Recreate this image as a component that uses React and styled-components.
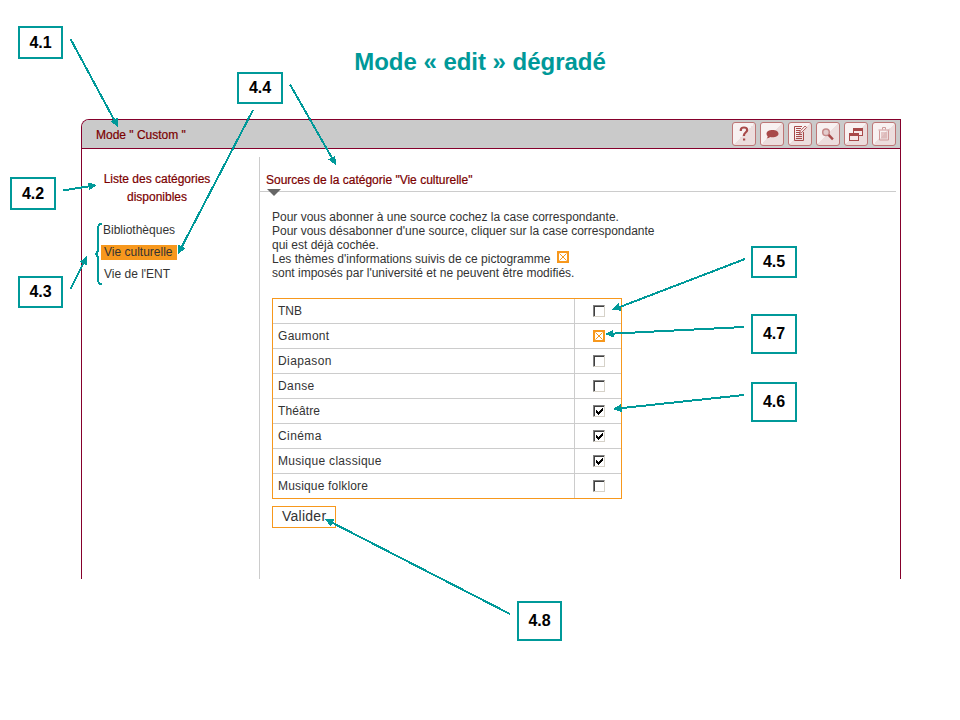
import React from "react";
import styled, { createGlobalStyle } from "styled-components";

const TEAL = "#009999";
const WINE = "#85002b";
const ORANGE = "#f7981d";
const RULE = "#cccccc";

const GlobalStyle = createGlobalStyle`
  *, *::before, *::after { box-sizing: border-box; }
  body {
    margin: 0;
    background: #ffffff;
    font-family: "Liberation Sans", Arial, sans-serif;
    font-size: 12px;
    color: #333333;
  }
`;

const Page = styled.div`
  position: relative;
  width: 960px;
  height: 720px;
  overflow: hidden;
  background: #ffffff;
`;

const Title = styled.h1`
  margin: 0;
  height: 119px;
  padding-top: 48px;
  text-align: center;
  font-size: 24px;
  line-height: 28px;
  font-weight: bold;
  letter-spacing: -0.02px;
  color: ${TEAL};
`;

const Panel = styled.section`
  display: flex;
  flex-direction: column;
  width: 820px;
  height: 460px;
  margin-left: 81px;
  border: 1px solid ${WINE};
  border-bottom: none;
  border-top-left-radius: 8px;
`;

const Header = styled.header`
  display: flex;
  align-items: center;
  justify-content: space-between;
  height: 29px;
  flex: none;
  padding: 0 4px 0 14px;
  background: #cacaca;
  border-bottom: 1px solid ${WINE};
  border-top-left-radius: 7px;
`;

const Heading = styled.span`
  color: #7b0000;
  -webkit-text-stroke: 0.2px #7b0000;
  padding-top: ${(p) => p.$drop || "0"};
  white-space: pre;
`;

const Toolbar = styled.div`
  display: flex;
  gap: 4px;
`;

const ToolButton = styled.button`
  display: block;
  width: 24px;
  height: 24px;
  padding: 0;
  border: 1px solid #bd7676;
  border-radius: 3px;
  background: linear-gradient(135deg, #f8f1f1 50%, #ecdddd 50%);
  svg { display: block; }
`;

const Body = styled.div`
  display: flex;
  flex: 1;
`;

const Sidebar = styled.nav`
  width: 177px;
  padding: 21px 0 0 19px;
`;

const SidebarTitle = styled.h2`
  width: 112px;
  margin: 0 0 17px;
  text-align: center;
  font-size: 12px;
  font-weight: normal;
  line-height: 18px;
  white-space: nowrap;
  color: #7b0000;
  -webkit-text-stroke: 0.2px #7b0000;
`;

const CategoryList = styled.ul`
  list-style: none;
  margin: 0;
  padding: 0;
  display: flex;
  flex-direction: column;
  align-items: flex-start;
  gap: 7px;
`;

const Category = styled.li`
  height: 15px;
  line-height: 15px;
  padding: 0 ${(p) => (p.$selected ? "5px" : "0")} 0 ${(p) => p.$indent}px;
  background: ${(p) => (p.$selected ? ORANGE : "transparent")};
  white-space: nowrap;
`;

const Main = styled.main`
  flex: 1;
  margin-top: 8px;
  padding-right: 4px;
  border-left: 1px solid ${RULE};
`;

const SourcesTitle = styled.div`
  position: relative;
  height: 35px;
  padding: 16px 0 0 6px;
  line-height: 14px;
  border-bottom: 1px solid ${RULE};
`;

const Pointer = styled.svg`
  position: absolute;
  left: 7px;
  bottom: -5px;
`;

const Content = styled.div`
  padding: 18px 0 0 12px;
`;

const Help = styled.div`
  height: 88px;
  line-height: 14px;
`;

const HelpLine = styled.div`
  display: flex;
  align-items: center;
  gap: 7px;
  height: 14px;
  white-space: nowrap;
  svg { margin-top: -4px; }
`;

const SourceTable = styled.div`
  width: 350px;
  border: 1px solid ${ORANGE};
`;

const SourceRow = styled.div`
  display: grid;
  grid-template-columns: 301px 1px 46px;
  height: 25px;
  border-bottom: 1px solid ${RULE};
  &:last-child { border-bottom: none; height: 24px; }
`;

const SourceName = styled.span`
  padding-left: 5px;
  line-height: 24px;
  letter-spacing: ${(p) => p.$spacing};
`;

const Divider = styled.span`
  background: ${RULE};
`;

const SourceCell = styled.span`
  padding: 6px 0 0 18px;
`;

const Box = styled.span`
  display: block;
  width: 12px;
  height: 12px;
  border: 1px solid;
  border-color: #808080 #d6d2c9 #d6d2c9 #808080;
  box-shadow: inset 1px 1px 0 #404040;
  background: #ffffff;
  svg { display: block; }
`;

const Submit = styled.button`
  display: block;
  width: 64px;
  height: 22px;
  margin-top: 7px;
  padding: 0 0 1px 9px;
  text-align: left;
  border: 1px solid ${ORANGE};
  background: #ffffff;
  color: #333333;
  font: 14px/19px "Liberation Sans", Arial, sans-serif;
  letter-spacing: 0.25px;
`;

const Overlay = styled.svg`
  position: absolute;
  inset: 0;
  pointer-events: none;
`;

const Callout = styled.div`
  position: absolute;
  left: ${(p) => p.$x}px;
  top: ${(p) => p.$y}px;
  width: ${(p) => p.$w}px;
  height: ${(p) => p.$h}px;
  display: flex;
  align-items: center;
  justify-content: center;
  border: 2px solid ${TEAL};
  background: #ffffff;
  color: #000000;
  font-size: 16px;
  line-height: 18px;
  font-weight: bold;
`;

const callouts = [
  ["4.1", 18, 26, 45, 33],
  ["4.4", 237, 72, 46, 32],
  ["4.2", 10, 177, 46, 33],
  ["4.3", 18, 276, 45, 32],
  ["4.5", 751, 246, 46, 32],
  ["4.7", 751, 314, 46, 40],
  ["4.6", 751, 382, 46, 40],
  ["4.8", 517, 601, 45, 40],
];

const arrows = [
  [70.5, 39, 118, 127],
  [253, 110, 178, 254],
  [290, 84.5, 336, 165],
  [63, 190.5, 97, 185],
  [70.5, 289, 87, 256],
  [745, 259, 612, 310],
  [744, 327, 605, 334],
  [744, 395, 613, 409],
  [510, 614, 325, 519],
];

function Arrow({ points: [x1, y1, x2, y2] }) {
  const len = Math.hypot(x2 - x1, y2 - y1);
  const ux = (x2 - x1) / len;
  const uy = (y2 - y1) / len;
  const bx = x2 - ux * 8.5;
  const by = y2 - uy * 8.5;
  const head = `${x2},${y2} ${bx - uy * 4},${by + ux * 4} ${bx + uy * 4},${by - ux * 4}`;
  return (
    <g shapeRendering="crispEdges">
      <line x1={x1} y1={y1} x2={bx} y2={by} stroke={TEAL} strokeWidth="2" />
      <polygon points={head} fill={TEAL} />
    </g>
  );
}

function LockedMark() {
  return (
    <svg width="12" height="12" viewBox="0 0 12 12" display="block">
      <rect width="12" height="12" fill={ORANGE} />
      <rect x="2" y="2" width="8" height="8" fill="#fff" />
      <path d="M2.500 2.500l7 7M9.500 2.500l-7 7" stroke={ORANGE} strokeWidth="1" />
    </svg>
  );
}

function SourceState({ state }) {
  if (state === "locked") return <LockedMark />;
  return (
    <Box>
      {state === "on" && (
        <svg width="10" height="10" viewBox="0 0 10 10" shapeRendering="crispEdges">
          <path
            d="M2 4h1v3h-1zM3 5h1v3h-1zM4 6h1v3h-1zM5 5h1v3h-1zM6 4h1v3h-1zM7 3h1v3h-1zM8 2h1v3h-1z"
            fill="#000"
          />
        </svg>
      )}
    </Box>
  );
}

const DARK = "#a84a4a";

const icons = {
  Aide: (
    <path d="M7.800 8V7C7.800 5.200 9 4.500 11 4.500s3.200.8 3.200 2.400c0 2.600-3.200 2.600-3.200 5.200v1M10 16.500h2.200" fill="none" stroke={DARK} strokeWidth="2.200" />
  ),
  Commentaire: (
    <path d="M11.500 7c3.500 0 6 1.500 6 3.700s-2.500 3.600-6 3.600c-1 0-1.700-.1-2.500-.3-1 1-2.200 1.400-3.500 1.500.8-.6 1.200-1.300 1.200-2.200-.8-.7-1.200-1.600-1.200-2.600C5.500 8.500 8 7 11.500 7z" fill={DARK} />
  ),
  Modifier: (
    <g>
      <path d="M13 3.500H5.500v14h9V9" fill="none" stroke={DARK} />
      <path d="M7 5.500h5M7 7.500h4M7 9.500h4M7 11.500h6M7 13.500h6M7 15.500h6" stroke={DARK} />
      <path d="M10.500 10.500l.8-2.600 4.800-4.900 1.500 1.500-4.900 4.900z" fill="#f8eeee" stroke={DARK} strokeWidth=".9" />
    </g>
  ),
  Rechercher: (
    <g>
      <circle cx="9" cy="9.300" r="3.300" fill="#e3cccc" stroke="#c68a8a" strokeWidth="1.500" />
      <path d="M11.600 11.900l4.300 4.400" stroke={DARK} strokeWidth="2.400" />
    </g>
  ),
  Fenêtres: (
    <g fill="#f6eaea" stroke={DARK} shapeRendering="crispEdges">
      <rect x="8.500" y="5.500" width="9" height="7" />
      <path d="M8 6.500h10" strokeWidth="3" />
      <rect x="4.500" y="10.500" width="9" height="7" />
      <path d="M4 11.500h10" strokeWidth="3" />
    </g>
  ),
  Supprimer: (
    <g fill="none" stroke="#cf9a9a">
      <path d="M5.500 7h11M9.500 6.500V4.500h3v2M6.500 7.500v9.500h9V7.500M9 9v6.500M11 9v6.500M13 9v6.500" />
    </g>
  ),
};

const sources = [
  ["TNB", "off", "0"],
  ["Gaumont", "locked", "0.3px"],
  ["Diapason", "off", "0.4px"],
  ["Danse", "off", "0.4px"],
  ["Théâtre", "on", "0.1px"],
  ["Cinéma", "on", "0.4px"],
  ["Musique classique", "on", "0.3px"],
  ["Musique folklore", "off", "0.17px"],
];

export default function App() {
  return (
    <Page>
      <GlobalStyle />
      <Title>Mode « edit » dégradé</Title>
      <Panel>
        <Header>
          <Heading $drop="2px">Mode " Custom "</Heading>
          <Toolbar>
            {Object.entries(icons).map(([name, drawing]) => (
              <ToolButton key={name} aria-label={name}>
                <svg width="22" height="22" viewBox="0 0 22 22">{drawing}</svg>
              </ToolButton>
            ))}
          </Toolbar>
        </Header>
        <Body>
          <Sidebar>
            <SidebarTitle>
              Liste des catégories
              <br />
              disponibles
            </SidebarTitle>
            <CategoryList>
              <Category $indent={2}>Bibliothèques</Category>
              <Category $indent={3} $selected>Vie culturelle</Category>
              <Category $indent={3}>Vie de l'ENT</Category>
            </CategoryList>
          </Sidebar>
          <Main>
            <SourcesTitle>
              <Heading>Sources de la catégorie "Vie culturelle"</Heading>
              <Pointer width="14" height="7" viewBox="0 0 14 7">
                <path d="M0 0h14L7 7z" fill="#666" />
              </Pointer>
            </SourcesTitle>
            <Content>
              <Help>
                <HelpLine>Pour vous abonner à une source cochez la case correspondante.</HelpLine>
                <HelpLine>Pour vous désabonner d'une source, cliquer sur la case correspondante</HelpLine>
                <HelpLine>qui est déjà cochée.</HelpLine>
                <HelpLine>
                  Les thèmes d'informations suivis de ce pictogramme <LockedMark />
                </HelpLine>
                <HelpLine>sont imposés par l'université et ne peuvent être modifiés.</HelpLine>
              </Help>
              <SourceTable>
                {sources.map(([name, state, spacing]) => (
                  <SourceRow key={name}>
                    <SourceName $spacing={spacing}>{name}</SourceName>
                    <Divider />
                    <SourceCell>
                      <SourceState state={state} />
                    </SourceCell>
                  </SourceRow>
                ))}
              </SourceTable>
              <Submit>Valider</Submit>
            </Content>
          </Main>
        </Body>
      </Panel>
      <Overlay width="960" height="720" viewBox="0 0 960 720">
        {arrows.map((points) => (
          <Arrow key={points.join()} points={points} />
        ))}
        <path
          d="M102 223.500Q98 224 98 229V248Q98 254 94.500 254Q98 254 98 260V279Q98 284 102 284.500"
          fill="none"
          stroke={TEAL}
          strokeWidth="2"
          shapeRendering="crispEdges"
        />
      </Overlay>
      {callouts.map(([label, x, y, w, h]) => (
        <Callout key={label} $x={x} $y={y} $w={w} $h={h}>{label}</Callout>
      ))}
    </Page>
  );
}
